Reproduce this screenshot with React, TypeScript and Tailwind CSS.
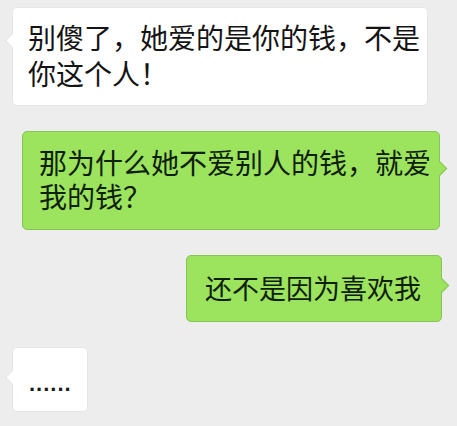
import React from 'react';

const font = { fontFamily: '"Noto Sans CJK SC", "Noto Sans", sans-serif' };

// small triangle tail on the bubble edge
const Tail: React.FC<{ side: 'left' | 'right'; top: string; green?: boolean }> = ({ side, top, green }) => (
  <span
    className={`absolute w-[11px] h-[11px] rotate-45 ${top} ${
      side === 'left' ? '-left-[6px] border-l border-b' : '-right-[6px] border-r border-t'
    } ${green ? 'bg-[#9ce35e] border-[#86c455]' : 'bg-white border-[#e2e2e2]'}`}
  />
);

export default function App() {
  return (
    <div className="w-[457px] h-[426px] bg-[#ededed] overflow-hidden flex flex-col gap-[25px] pt-[7px] text-[#141414]" style={font}>
      {/* received */}
      <div className="relative ml-[12px] w-[416px] h-[99px] bg-white rounded-[5px] border border-[#e6e6e6] pl-[15px] pt-[11px] text-[28px] leading-[36px]">
        <Tail side="left" top="top-[27px]" />
        <span className="relative">别傻了，她爱的是你的钱，不是<br />你这个人！</span>
      </div>

      {/* sent */}
      <div className="relative self-end mr-[17px] w-[418px] h-[99px] bg-[#9ce35e] rounded-[5px] border border-[#86c455] pl-[16px] pt-[13px] text-[28px] leading-[34px] text-[#0f200a]">
        <Tail side="right" top="top-[31px]" green />
        <span className="relative">那为什么她不爱别人的钱，就爱<br />我的钱？</span>
      </div>

      <div className="relative self-end mr-[15px] w-[256px] h-[67px] bg-[#9ce35e] rounded-[5px] border border-[#86c455] pl-[18px] pt-[15px] text-[27px] leading-[33px] text-[#0f200a]">
        <Tail side="right" top="top-[24px]" green />
        <span className="relative">还不是因为喜欢我</span>
      </div>

      {/* received */}
      <div className="relative ml-[12px] w-[76px] h-[65px] bg-white rounded-[5px] border border-[#e6e6e6] pl-[16px] pt-[21px]">
        <Tail side="left" top="top-[24px]" />
        <span className="relative text-[22px] leading-[30px] tracking-[1px] font-bold text-[#1a1a1a]" style={{ fontFamily: '"Liberation Sans", sans-serif' }}>......</span>
      </div>
    </div>
  );
}
